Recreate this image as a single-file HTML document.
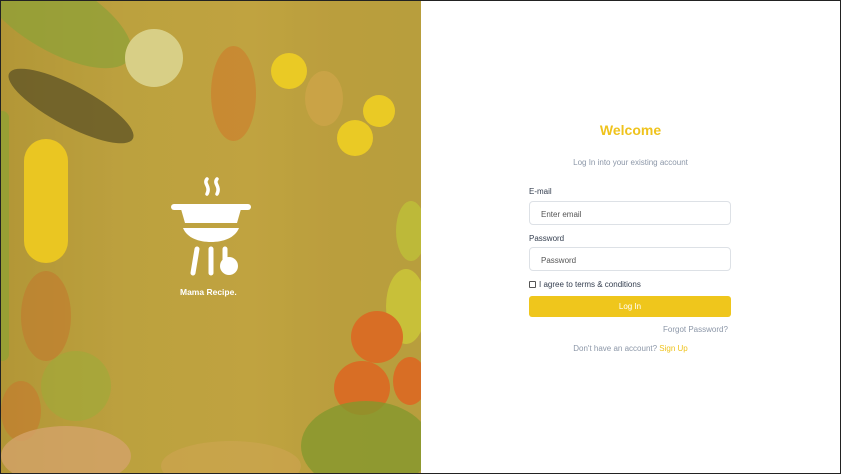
<!DOCTYPE html>
<html><head><meta charset="utf-8"><style>
*{margin:0;padding:0;box-sizing:border-box}
html,body{width:841px;height:474px;overflow:hidden}
body{background:#fff;font-family:"Liberation Sans",sans-serif;position:relative}
.frame{position:absolute;left:0;top:0;width:841px;height:474px;border:1px solid #222;z-index:10;pointer-events:none}
.left{position:absolute;left:1px;top:1px;width:420px;height:472px;overflow:hidden;
background:linear-gradient(90deg,#a88d38 0%,#b59a42 30%,#b99d44 60%,#b29640 80%,#b09640 100%)}
.b{position:absolute;border-radius:50%}
.ov{position:absolute;inset:0;background:rgba(220,190,50,0.2)}
.right{position:absolute;left:421px;top:1px;width:419px;height:472px;background:#fff}
h1{position:absolute;left:0;width:100%;top:121px;text-align:center;color:#efc31d;font-size:14px;font-weight:bold}
.sub{position:absolute;left:0;width:100%;top:157px;text-align:center;color:#8c97a8;font-size:8px}
.lbl{position:absolute;left:108px;font-size:8px;color:#333d4e}
.inp{position:absolute;left:108px;width:202px;height:24px;border:1px solid #dde1e6;border-radius:4px;font-size:8px;color:#555;padding:8px 0 0 11px}
.btn{position:absolute;left:108px;top:295px;width:202px;height:21px;background:#efc61c;border-radius:3px;color:#fff;font-size:8px;text-align:center;line-height:21px}
</style></head><body>
<div class="left">
 <div class="b" style="left:-30px;top:-20px;width:170px;height:70px;background:#7f9a3a;transform:rotate(30deg);opacity:.8"></div>
 <div class="b" style="left:0;top:85px;width:140px;height:40px;background:#4a4224;transform:rotate(28deg);opacity:.85"></div>
 <div class="b" style="left:124px;top:28px;width:58px;height:58px;background:#d8d49c"></div>
 <div class="b" style="left:23px;top:138px;width:44px;height:124px;background:#eec81e;border-radius:22px"></div>
 <div class="b" style="left:-6px;top:110px;width:14px;height:250px;background:#7e9b34;border-radius:7px;opacity:.8"></div>
 <div class="b" style="left:210px;top:45px;width:45px;height:95px;background:#c96a2a;opacity:.6"></div>
 <div class="b" style="left:270px;top:52px;width:36px;height:36px;background:#eecd22"></div>
 <div class="b" style="left:336px;top:119px;width:36px;height:36px;background:#eecd22"></div>
 <div class="b" style="left:362px;top:94px;width:32px;height:32px;background:#eecd22"></div>
 <div class="b" style="left:304px;top:70px;width:38px;height:55px;background:#cda050;opacity:.7"></div>
 <div class="b" style="left:395px;top:200px;width:30px;height:60px;background:#b8c03a;opacity:.8"></div>
 <div class="b" style="left:385px;top:268px;width:40px;height:75px;background:#c8cc3a;opacity:.8"></div>
 <div class="b" style="left:350px;top:310px;width:52px;height:52px;background:#d85a22"></div>
 <div class="b" style="left:333px;top:360px;width:56px;height:54px;background:#d85a22"></div>
 <div class="b" style="left:392px;top:356px;width:34px;height:48px;background:#d85a22"></div>
 <div class="b" style="left:300px;top:400px;width:130px;height:90px;background:#6f8e2c;opacity:.8"></div>
 <div class="b" style="left:20px;top:270px;width:50px;height:90px;background:#c0602a;opacity:.5"></div>
 <div class="b" style="left:40px;top:350px;width:70px;height:70px;background:#8ea63a;opacity:.6"></div>
 <div class="b" style="left:0;top:380px;width:40px;height:60px;background:#c5602a;opacity:.5"></div>
 <div class="b" style="left:0;top:425px;width:130px;height:60px;background:#d29c78;opacity:.8"></div>
 <div class="b" style="left:160px;top:440px;width:140px;height:50px;background:#cfa060;opacity:.5"></div>
 <div class="ov"></div>
 <svg style="position:absolute;left:168px;top:175px" width="84" height="102" viewBox="0 0 84 102">
  <g fill="none" stroke="#fff" stroke-width="3.5" stroke-linecap="round">
   <path d="M38 3c-4 5 4 7 0 15"/><path d="M48 3c-4 5 4 7 0 15"/>
  </g>
  <rect x="2" y="28" width="80" height="6" rx="3" fill="#fff"/>
  <path d="M12 33h60l-4 14H16z" fill="#fff"/>
  <path d="M14 52h56c-4 10-16 14-28 14s-24-4-28-14z" fill="#fff"/>
  <g stroke="#fff" stroke-width="5" stroke-linecap="round"><path d="M28 73l-4 24"/><path d="M42 73v24"/><path d="M56 73v10"/></g>
  <circle cx="60" cy="90" r="9" fill="#fff"/>
 </svg>
 <div style="position:absolute;left:179px;top:286px;color:#fff;font-size:8.5px;font-weight:bold">Mama Recipe.</div>
</div>
<div class="right">
 <h1>Welcome</h1>
 <div class="sub">Log In into your existing account</div>
 <div class="lbl" style="top:186px">E-mail</div>
 <div class="inp" style="top:200px">Enter email</div>
 <div class="lbl" style="top:233px">Password</div>
 <div class="inp" style="top:246px">Password</div>
 <div style="position:absolute;left:108px;top:280px;width:7px;height:7px;border:1px solid #555;border-radius:1px"></div>
 <div class="lbl" style="left:118px;top:279px">I agree to terms &amp; conditions</div>
 <div class="btn">Log In</div>
 <div style="position:absolute;left:242px;top:324px;font-size:8px;color:#8c97a8">Forgot Password?</div>
 <div style="position:absolute;left:0;width:100%;top:343px;text-align:center;font-size:8px;color:#8c97a8">Don't have an account? <span style="color:#efc31d">Sign Up</span></div>
</div>
<div class="frame"></div>
</body></html>
